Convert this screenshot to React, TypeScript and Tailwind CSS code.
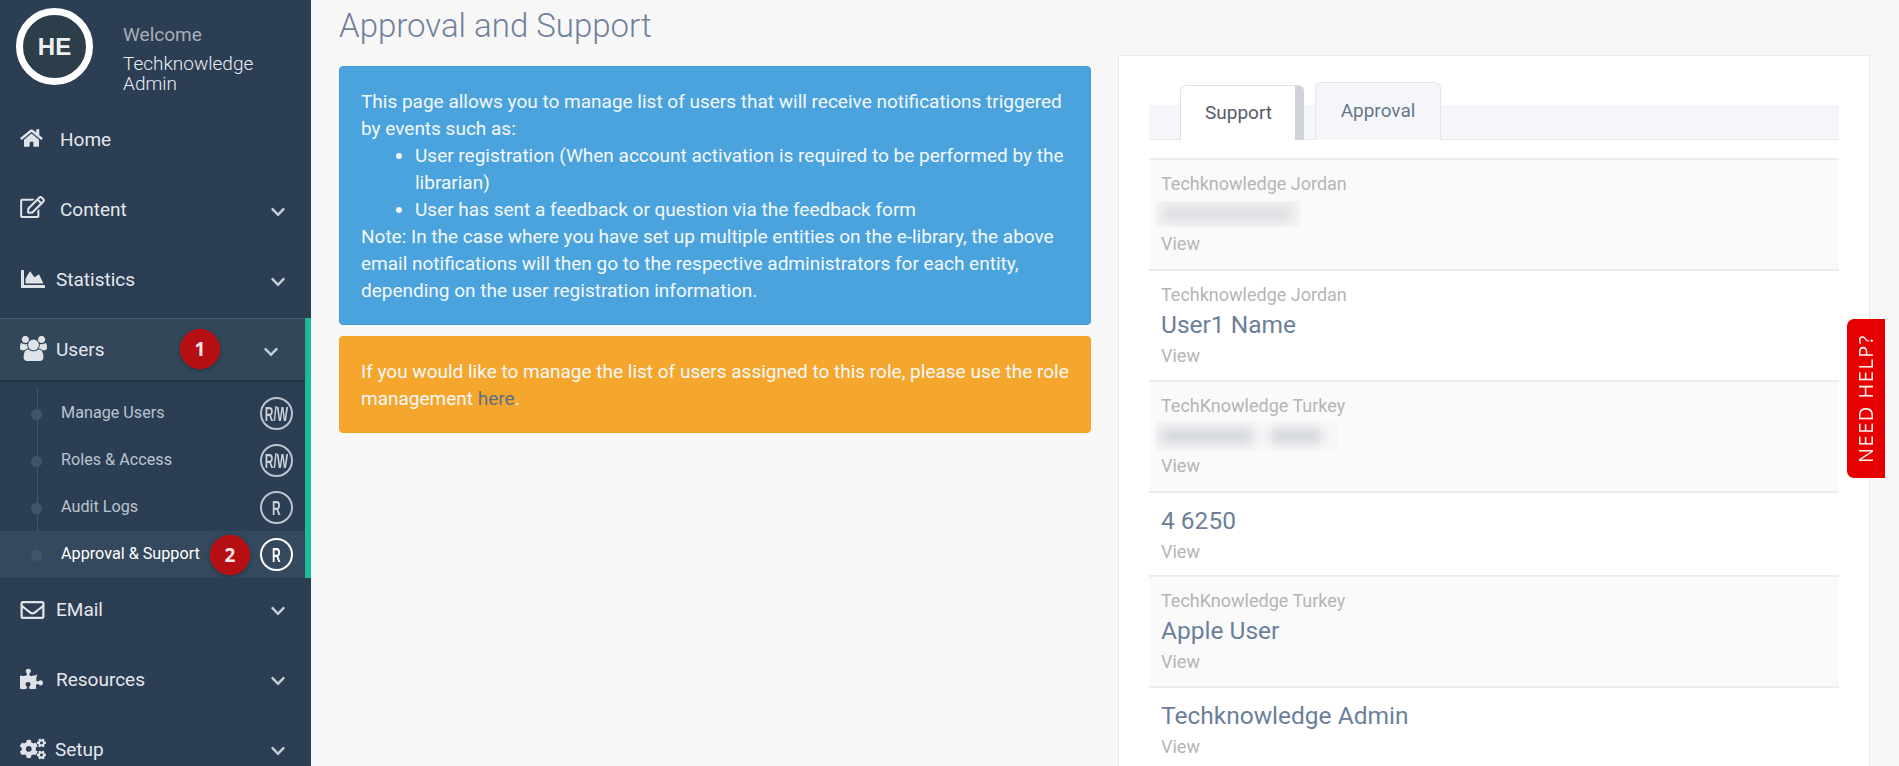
import React from 'react';
import { FaHome, FaRegEdit, FaChartArea, FaRegEnvelope, FaPuzzlePiece, FaCogs, FaChevronDown } from 'react-icons/fa';

const roboto = "font-['Roboto',sans-serif]";

// font-awesome 4 "users", the 5.x one in react-icons has another shape
const UsersIcon = ({ className }: { className: string }) => (
  <svg className={className} viewBox="0 128 1920 1536" fill="currentColor">
    <path d="M593 896q-162 5-265 128h-134q-82 0-138-40.500t-56-118.500q0-353 124-353 6 0 43.500 21t97.500 42.500 119 21.500q67 0 133-23-5 37-5 66 0 139 81 256zm1071 637q0 120-73 189.500t-194 69.500h-874q-121 0-194-69.500t-73-189.500q0-53 3.500-103.500t14-109 26.500-108.500 43-97.500 62-81 85.500-53.500 111.500-20q10 0 43 21.500t73 48 107 48 135 21.500 135-21.500 107-48 73-48 43-21.500q61 0 111.500 20t85.500 53.500 62 81 43 97.500 26.500 108.500 14 109 3.500 103.500zm-1024-1277q0 106-75 181t-181 75-181-75-75-181 75-181 181-75 181 75 75 181zm704 384q0 159-112.500 271.500t-271.500 112.500-271.500-112.500-112.500-271.500 112.500-271.500 271.500-112.500 271.500 112.500 112.500 271.500zm576 225q0 78-56 118.500t-138 40.500h-134q-103-123-265-128 81-117 81-256 0-29-5-66 66 23 133 23 59 0 119-21.500t97.500-42.500 43.500-21q124 0 124 353zm-128-609q0 106-75 181t-181 75-181-75-75-181 75-181 181-75 181 75 75 181z" />
  </svg>
);

const NavItem = ({ icon, label, textClass, chevron = 'top-[29px]', className = '' }: { icon: React.ReactNode; label: string; textClass: string; chevron?: string; className?: string }) => (
  <div className={`relative flex shrink-0 items-center h-[70px] pl-5 text-[19px] text-[#e4e8ec] ${className}`}>
    <span className="flex w-[26px] shrink-0 text-[#dfe3e7]">{icon}</span>
    <span className={`mt-[1px] ${textClass}`}>{label}</span>
    {chevron && <FaChevronDown className={`absolute right-[25px] w-[16px] h-[16px] text-[#c4ccd5] ${chevron}`} />}
  </div>
);

const Badge = ({ text, active }: { text: string; active?: boolean }) => (
  <span className={`flex items-center justify-center w-[33px] h-[33px] rounded-full border-2 shrink-0 ${active ? 'border-white text-white' : 'border-[#bcc5cf] text-[#c9d0d8]'}`}>
    <span className="font-['Liberation_Sans',sans-serif] font-bold text-[20px] scale-x-[0.6] whitespace-nowrap">{text}</span>
  </span>
);

const SubItem = ({ label, badge, active }: { label: string; badge: string; active?: boolean }) => (
  <div className={`relative flex items-center justify-between h-[47px] pl-[61px] pr-[12px] ${active ? 'bg-[#34495e] text-white' : 'text-[#b9c4d0]'}`}>
    <span className="absolute left-[31px] top-[19px] w-[11px] h-[11px] rounded-full bg-[#415568]" />
    <span className="text-[16.2px] -mt-[1px]">{label}</span>
    <Badge text={badge} active={active} />
  </div>
);

const Marker = ({ n, className }: { n: number; className: string }) => (
  <span className={`absolute flex items-center justify-center w-[40px] h-[40px] rounded-full bg-[#b50f14] border border-[#d80a0a] shadow-[0_1px_4px_rgba(0,0,0,0.35)] text-[#f8e4e4] font-['Open_Sans',sans-serif] font-bold text-[19px] ${className}`}>{n}</span>
);

const Row = ({ org, name, blur, striped }: { org?: string; name?: string; blur?: React.ReactNode; striped?: boolean }) => (
  <div className={`border-t-2 border-[#eaecf1] px-3 ${org ? 'h-[111px] pt-[11px]' : 'h-[84px] pt-[11px]'} ${striped ? 'bg-[#fafafa]' : 'bg-white'}`}>
    {org && <div className="text-[18px] leading-[26px] text-[#b5b5b5]">{org}</div>}
    {blur ?? <div className="text-[24.5px] leading-[34px] text-[#6c7f9a]">{name}</div>}
    <div className="mt-[1px] text-[18px] leading-[26px] text-[#b5b5b5]">View</div>
  </div>
);

export default function App() {
  return (
    <div className={`flex h-[766px] w-[1899px] overflow-hidden bg-[#f7f7f7] ${roboto}`}>
      <aside className="w-[311px] shrink-0 bg-[#2c3e53] flex flex-col overflow-hidden">
        <div className="flex h-[105px] shrink-0 pl-4 pt-2">
          <div className="w-[77px] h-[77px] rounded-full border-[7px] border-white bg-[#2c3e4a] flex items-center justify-center text-[#eef0f1] font-['Liberation_Sans',sans-serif] font-bold text-[24px]">HE</div>
          <div className="ml-[30px] pt-[17px] text-[19px] leading-[20px]">
            <div className="text-[#a9aeb4]">Welcome</div>
            <div className="mt-[9px] w-[140px] text-[#e9edf0] font-light">Techknowledge Admin</div>
          </div>
        </div>
        <NavItem icon={<FaHome className="w-[23px] h-[20px] -mt-[4px]" />} label="Home" textClass="ml-[14px]" chevron="" />
        <NavItem icon={<FaRegEdit className="w-[25px] h-[22px] -mt-[6px]" />} label="Content" textClass="ml-[14px]" />
        <NavItem icon={<FaChartArea className="w-[28px] h-[24px] -mt-[3px]" />} label="Statistics" textClass="ml-[10px]" />
        <div className="mt-[3px] border-r-[6px] border-[#1abc9c] shrink-0">
          <div className="relative flex items-center h-[62px] pl-5 text-[19px] text-[#e4e8ec] bg-[#33475b] border-t border-[#48596b] shadow-[0_1px_2px_rgba(0,0,0,0.3)]">
            <UsersIcon className="w-[27px] h-[25px] text-[#dfe3e7] -mt-[2px]" />
            <span className="ml-[9px] mt-[1px]">Users</span>
            <FaChevronDown className="absolute right-[26px] top-[25px] w-[16px] h-[16px] text-[#c4ccd5]" />
            <Marker n={1} className="left-[180px] top-[10px]" />
          </div>
          <div className="relative pt-[10px]">
            <span className="absolute left-[37px] top-[8px] bottom-0 w-px bg-[#415568]" />
            <SubItem label="Manage Users" badge="R/W" />
            <SubItem label="Roles & Access" badge="R/W" />
            <SubItem label="Audit Logs" badge="R" />
            <SubItem label="Approval & Support" badge="R" active />
            <Marker n={2} className="left-[210px] bottom-[3px]" />
          </div>
        </div>
        <NavItem icon={<FaRegEnvelope className="w-[25px] h-[24px]" />} label="EMail" textClass="ml-[10px]" chevron="top-[25px]" className="h-[64px]!" />
        <NavItem icon={<FaPuzzlePiece className="w-[23px] h-[22px] -mt-[3px]" />} label="Resources" textClass="ml-[10px]" chevron="top-[28px]" className="mt-[3px]" />
        <NavItem icon={<FaCogs className="w-[27px] h-[24px] -mt-[3px]" />} label="Setup" textClass="ml-[9px]" chevron="top-[28px]" />
      </aside>

      <main className="flex-1 pl-[28px]">
        <h1 className="text-[33px] leading-[52px] font-light text-[#6f8199]">Approval and Support</h1>
        <div className="flex gap-[27px]">
          <div className="w-[752px] shrink-0 mt-[14px] text-[19px] leading-[27px] text-[#f4f8fb]">
            <div className="rounded-[4px] border border-[#3f9bdc] bg-[#4ba3de] px-[21px] pt-[21px] h-[259px]">
              This page allows you to manage list of users that will receive notifications triggered by events such as:
              <ul className="list-disc pl-[54px]">
                <li>User registration (When account activation is required to be performed by the librarian)</li>
                <li>User has sent a feedback or question via the feedback form</li>
              </ul>
              Note: In the case where you have set up multiple entities on the e-library, the above email notifications will then go to the respective administrators for each entity, depending on the user registration information.
            </div>
            <div className="mt-[11px] rounded-[4px] border border-[#f2a31f] bg-[#f4a72c] px-[21px] pt-[21px] h-[97px]">
              If you would like to manage the list of users assigned to this role, please use the role management <a className="text-[#5f6f86]">here</a>.
            </div>
          </div>

          <div className="w-[752px] shrink-0 h-[720px] mt-[3px] bg-white border border-[#ebebeb] px-[30px] pt-[26px]">
            <div className="relative flex items-end h-[58px] pl-[31px] bg-[linear-gradient(to_bottom,white_0,white_23px,#f5f6fa_23px)] border-b border-[#e6e8ee]">
              <div className="relative -mb-px flex h-[55px] w-[124px] items-center bg-white border border-b-0 border-[#dfe1e6] border-r-[9px] border-r-[#d0d3d8] rounded-t-[6px] pl-[24px] text-[19px] text-[#555c66]">Support</div>
              <div className="ml-[11px] -mb-px flex h-[58px] w-[126px] items-center justify-center pb-[1px] bg-[#f5f6fa] border border-b-0 border-[#e4e6ec] rounded-t-[6px] text-[19px] text-[#68778c]">Approval</div>
            </div>
            <div className="mt-[18px]">
              <Row striped org="Techknowledge Jordan" blur={
                <div className="-ml-[6px] h-[26px] w-[145px] my-[4px] bg-[#f6f6f7] overflow-hidden"><div className="ml-[6px] mt-[5px] w-[132px] h-[16px] bg-[#dcdde0] blur-[6px]" /></div>
              } />
              <Row org="Techknowledge Jordan" name="User1 Name" />
              <Row striped org="TechKnowledge Turkey" blur={
                <div className="-ml-[6px] flex gap-[18px] h-[30px] w-[183px] my-[2px] bg-[#f7f7f8] overflow-hidden pl-[6px] pt-[8px]">
                  <div className="w-[92px] h-[14px] bg-[#cfd2d8] blur-[6px]" /><div className="w-[50px] h-[14px] bg-[#cfd2d8] blur-[6px]" />
                </div>
              } />
              <Row name="4 6250" />
              <Row striped org="TechKnowledge Turkey" name="Apple User" />
              <Row name="Techknowledge Admin" />
            </div>
          </div>
        </div>
      </main>

      <div className="absolute left-[1847px] top-[319px] flex w-[38px] h-[159px] items-center justify-center bg-[#e60000] rounded-l-[7px]">
        <span className="[writing-mode:vertical-rl] rotate-180 whitespace-nowrap text-[20px] font-medium tracking-[1.5px] text-[#fff1f1] font-['Open_Sans',sans-serif]">NEED HELP?</span>
      </div>
    </div>
  );
}
